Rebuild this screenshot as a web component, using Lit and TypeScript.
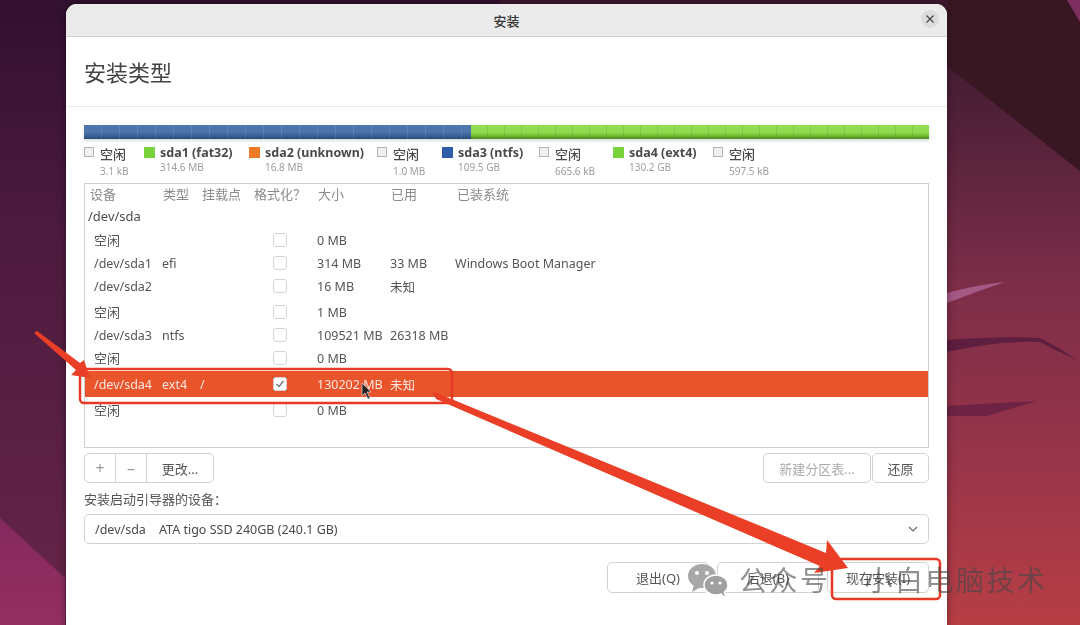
import { LitElement, html, css } from "lit";
import { customElement } from "lit/decorators.js";

const legend = [
  { free: true, w: 60, name: "空闲", size: "3.1 kB" },
  { w: 105, color: "#78d23c", name: "sda1 (fat32)", size: "314.6 MB" },
  { w: 128, color: "#ee7a28", name: "sda2 (unknown)", size: "16.8 MB" },
  { free: true, w: 65, name: "空闲", size: "1.0 MB" },
  { w: 97, color: "#2f5ca8", name: "sda3 (ntfs)", size: "109.5 GB" },
  { free: true, w: 74, name: "空闲", size: "665.6 kB" },
  { w: 100, color: "#78d23c", name: "sda4 (ext4)", size: "130.2 GB" },
  { free: true, w: 100, name: "空闲", size: "597.5 kB" },
];

const rows = [
  { h: 26, dev: "空闲", cn: true, size: "0 MB" },
  { h: 20, dev: "/dev/sda1", type: "efi", size: "314 MB", used: "33 MB", sys: "Windows Boot Manager" },
  { h: 26, dev: "/dev/sda2", size: "16 MB", used: "未知" },
  { h: 26, dev: "空闲", cn: true, size: "1 MB" },
  { h: 20, dev: "/dev/sda3", type: "ntfs", size: "109521 MB", used: "26318 MB" },
  { h: 26, dev: "空闲", cn: true, size: "0 MB" },
  { h: 26, dev: "/dev/sda4", type: "ext4", mount: "/", size: "130202 MB", used: "未知", sel: true },
  { h: 26, dev: "空闲", cn: true, size: "0 MB" },
];

@customElement("app-root")
export class AppRoot extends LitElement {
  static styles = css`
    :host {
      display: block;
      width: 1080px;
      height: 625px;
      overflow: hidden;
      position: relative;
      font-family: "Noto Sans", "Noto Sans CJK SC", sans-serif;
      background: #4a1838;
    }
    .wall { position: absolute; inset: 0; width: 1080px; height: 625px; }
    .window {
      position: absolute;
      left: 66px;
      top: 4px;
      width: 881px;
      height: 640px;
      background: #fff;
      border-radius: 11px 11px 0 0;
      box-shadow: 0 0 9px rgba(0, 0, 0, 0.4);
      display: flex;
      flex-direction: column;
      filter: blur(0.55px);
      color: #3d3d3d;
    }
    .titlebar {
      height: 33px;
      box-sizing: border-box;
      background: #ebebeb;
      border-bottom: 1px solid #d3d3d3;
      border-radius: 11px 11px 0 0;
      display: flex;
      align-items: center;
      justify-content: center;
      position: relative;
      font-size: 13px;
      font-weight: 500;
      color: #333;
      flex: none;
    }
    .close {
      position: absolute;
      right: 8px;
      top: 6px;
      width: 18px;
      height: 18px;
      border-radius: 50%;
      background: #dcdcdc;
      display: flex;
      align-items: center;
      justify-content: center;
    }
    .head {
      height: 70px;
      box-sizing: border-box;
      border-bottom: 1px solid #e8e8e8;
      padding: 0 0 2px 18px;
      display: flex;
      align-items: center;
      font-size: 22px;
      color: #444;
      flex: none;
    }
    .content {
      padding: 18px 18px 0 18px;
      display: flex;
      flex-direction: column;
    }
    .bar {
      height: 14px;
      display: flex;
      box-shadow: 0 2px 3px rgba(120, 150, 130, 0.3);
    }
    .seg { height: 14px; }
    .seg.blue {
      width: 387px;
      background:
        repeating-linear-gradient(90deg, transparent 0 17px, rgba(255, 255, 255, 0.1) 17px 18px),
        linear-gradient(180deg, #4d76ad 0 50%, #3f669c 70%, #274a78 100%);
    }
    .seg.green {
      flex: 1;
      background:
        repeating-linear-gradient(90deg, transparent 0 16px, rgba(60, 120, 20, 0.16) 16px 17px),
        linear-gradient(180deg, #92dc50 0 50%, #7cc63c 70%, #4c8a1e 100%);
    }
    .legend {
      display: flex;
      height: 44px;
      padding-top: 7px;
      box-sizing: border-box;
    }
    .item { display: flex; gap: 5px; align-items: flex-start; flex: none; }
    .swatch { width: 11px; height: 11px; margin-top: 1px; flex: none; box-sizing: border-box; }
    .swatch.free { border: 1px solid #b5b5b5; background: #f0f0f0; width: 10px; height: 10px; margin-right: 1px; }
    .ltxt { display: flex; flex-direction: column; }
    .lname { font-size: 12.5px; font-weight: 700; line-height: 14px; color: #4a4a4a; white-space: nowrap; }
    .lsize { font-size: 10px; line-height: 14px; color: #9d9d9d; white-space: nowrap; }
    .item.isfree .ltxt { padding-top: 1px; }
    .item.isfree .lname { font-weight: 500; font-size: 13px; line-height: 15px; }
    .item.isfree .lsize { line-height: 18px; }
    .table {
      height: 265px;
      box-sizing: border-box;
      border: 1px solid #cfcfcf;
      display: flex;
      flex-direction: column;
      font-size: 12.5px;
      color: #555;
    }
    .row {
      display: grid;
      grid-template-columns: 77px 38px 50px 67px 73px 65px 1fr;
      align-items: center;
      white-space: nowrap;
      flex: none;
    }
    .thead { height: 22px; box-sizing: border-box; padding-bottom: 3px; color: #8a8a8a; font-size: 13px; }
    .thead span:nth-child(1) { padding-left: 5px; }
    .thead span:nth-child(2) { padding-left: 1px; }
    .thead span:nth-child(3) { padding-left: 2px; }
    .thead span:nth-child(4) { padding-left: 4px; }
    .thead span:nth-child(5) { padding-left: 1px; }
    .thead span:nth-child(6) { padding-left: 1px; }
    .thead span:nth-child(7) { padding-left: 2px; }
    .diskrow { height: 21px; box-sizing: border-box; padding: 0 0 1px 3px; font-size: 13px; color: #4a4a4a; }
    .row.data > span:first-child { padding-left: 9px; }
    .row.data { color: #555; }
    .row.data.sel { background: #e9542b; color: #fbe6de; }
    .row.data > span.cn { font-size: 13px; padding-bottom: 2px; }
    .center { display: flex; padding-left: 23px; }
    .chk {
      width: 14px;
      height: 14px;
      box-sizing: border-box;
      border: 1px solid #d4d4d4;
      border-radius: 3px;
      background: #fff;
      display: flex;
      align-items: center;
      justify-content: center;
    }
    .tools { display: flex; justify-content: space-between; margin-top: 5px; height: 30px; }
    .group { display: flex; }
    .btn {
      box-sizing: border-box;
      height: 30px;
      border: 1px solid #d2d2d2;
      background: #fff;
      display: flex;
      align-items: center;
      justify-content: center;
      font-size: 13px;
      color: #555;
      white-space: nowrap;
    }
    .g1 { width: 32px; border-radius: 5px 0 0 5px; font-size: 16px; color: #999; }
    .g2 { width: 31px; border-left: 0; font-size: 16px; color: #999; }
    .g3 { width: 67px; border-left: 0; border-radius: 0 5px 5px 0; }
    .r1 { width: 108px; border-radius: 5px; color: #aaa; }
    .r2 { width: 57px; border-radius: 5px; margin-left: 1px; color: #555; }
    .label { height: 31px; display: flex; align-items: center; font-size: 13px; color: #555; }
    .combo {
      height: 30px;
      box-sizing: border-box;
      border: 1px solid #d2d2d2;
      border-radius: 5px;
      display: flex;
      align-items: center;
      padding: 0 10px;
      font-size: 12.5px;
      color: #4a4a4a;
      white-space: nowrap;
    }
    .combo .dev { width: 64px; }
    .combo .disk { flex: 1; }
    .actions { display: flex; justify-content: flex-end; margin-top: 18px; gap: 8px; }
    .act { width: 102px; height: 31px; border-radius: 5px; }
    .anno { position: absolute; inset: 0; width: 1080px; height: 625px; pointer-events: none; filter: blur(0.4px); }
    .mark {
      position: absolute;
      left: 687px;
      top: 562px;
      display: flex;
      align-items: center;
      font-size: 28px;
      color: rgba(70, 70, 70, 0.6);
      letter-spacing: 2.5px;
      white-space: nowrap;
      height: 36px;
      filter: blur(0.3px);
    }
    .mark svg { margin-right: 8px; }
    .mark .t { display: block; line-height: 36px; }
    .mark .t2 { display: block; line-height: 36px; margin-left: 34px; }
  `;

  private wall() {
    return html`<svg class="wall" viewBox="0 0 1080 625" preserveAspectRatio="none">
      <defs>
        <linearGradient id="l" x1="0" y1="0" x2="0" y2="1">
          <stop offset="0" stop-color="#331030" />
          <stop offset="0.35" stop-color="#4b1a3e" />
          <stop offset="0.8" stop-color="#5f2246" />
          <stop offset="1" stop-color="#652447" />
        </linearGradient>
        <linearGradient id="m" x1="0" y1="0" x2="0" y2="1">
          <stop offset="0" stop-color="#85295f" />
          <stop offset="1" stop-color="#952f60" />
        </linearGradient>
        <linearGradient id="r" x1="0" y1="0" x2="0" y2="1">
          <stop offset="0" stop-color="#40192f" />
          <stop offset="0.15" stop-color="#4a1f36" />
          <stop offset="0.45" stop-color="#7c2d48" />
          <stop offset="0.72" stop-color="#96344a" />
          <stop offset="1" stop-color="#b83e44" />
        </linearGradient>
      </defs>
      <rect x="0" y="0" width="500" height="625" fill="url(#l)" />
      <rect x="500" y="0" width="580" height="625" fill="url(#r)" />
      <polygon points="0,518 65,578 65,625 0,625" fill="url(#m)" />
      <polygon points="947,0 1080,0 1080,171 947,66" fill="#391722" />
      <polygon points="1067,0 1080,0 1080,22" fill="#7d3060" />
      <path d="M947 293 Q975 285 1005 282 Q975 292 947 303Z" fill="#a55a85" />
      <path d="M947 340 Q1000 336 1040 338 Q1060 348 1077 360 Q1055 350 1040 342 Q1000 340 947 352Z" fill="#5e1e40" />
      <path d="M947 406 L1037 401 L987 416 L947 416Z" fill="#6e2344" />
    </svg>`;
  }

  private annotations() {
    return html`<svg class="anno" viewBox="0 0 1080 625">
      <rect x="80" y="369" width="372" height="34" rx="4" fill="none" stroke="#e63a26" stroke-width="2.5" />
      <rect x="832" y="559" width="108" height="40" rx="4" fill="none" stroke="#e63a26" stroke-width="2.5" />
      <polygon points="34,333 37,331 80,363 84,360 90,378 71,375 76,370" fill="#ea3f26" />
      <polygon points="432,391 826,553 827,540 848,568 814,573 820,566 436,399" fill="#ea3f26" />
      <g transform="translate(362,383)">
        <path d="M0 0 V13 L3 10 L6 16 L8 15 L5 9 H9Z" fill="#222" stroke="#ddd" stroke-width="0.7" />
      </g>
    </svg>`;
  }

  render() {
    return html`
      ${this.wall()}
      <div class="window">
        <div class="titlebar">
          安装
          <div class="close">
            <svg width="10" height="10" viewBox="0 0 10 10"><path d="M1.5 1.5 8.5 8.5M8.5 1.5 1.5 8.5" stroke="#444" stroke-width="1.2" /></svg>
          </div>
        </div>
        <div class="head">安装类型</div>
        <div class="content">
          <div class="bar"><div class="seg blue"></div><div class="seg green"></div></div>
          <div class="legend">
            ${legend.map(
              (l) => html`<div class="item ${l.free ? "isfree" : ""}" style="width:${l.w}px">
                <div class="swatch ${l.free ? "free" : ""}" style=${l.color ? `background:${l.color}` : ""}></div>
                <div class="ltxt"><span class="lname">${l.name}</span><span class="lsize">${l.size}</span></div>
              </div>`
            )}
          </div>
          <div class="table">
            <div class="row thead">
              <span>设备</span><span>类型</span><span>挂载点</span><span>格式化？</span><span>大小</span><span>已用</span><span>已装系统</span>
            </div>
            <div class="row diskrow"><span>/dev/sda</span></div>
            ${rows.map(
              (r) => html`<div class="row data ${r.sel ? "sel" : ""}" style="height:${r.h}px">
                <span class="${r.cn ? "cn" : ""}">${r.dev}</span><span>${r.type ?? ""}</span><span>${r.mount ?? ""}</span>
                <span class="center"><span class="chk">${r.sel
                  ? html`<svg width="10" height="10" viewBox="0 0 10 10"><path d="M1.5 5 4 7.5 8.5 2" fill="none" stroke="#777" stroke-width="1.4" /></svg>`
                  : ""}</span></span>
                <span>${r.size}</span><span>${r.used ?? ""}</span><span>${r.sys ?? ""}</span>
              </div>`
            )}
          </div>
          <div class="tools">
            <div class="group">
              <div class="btn g1">+</div><div class="btn g2">–</div><div class="btn g3">更改...</div>
            </div>
            <div class="group">
              <div class="btn r1">新建分区表...</div><div class="btn r2">还原</div>
            </div>
          </div>
          <div class="label">安装启动引导器的设备：</div>
          <div class="combo">
            <span class="dev">/dev/sda</span><span class="disk">ATA tigo SSD 240GB (240.1 GB)</span>
            <svg width="10" height="6" viewBox="0 0 10 6"><path d="M1 1 5 5 9 1" fill="none" stroke="#666" stroke-width="1.1" /></svg>
          </div>
          <div class="actions">
            <div class="btn act">退出(Q)</div><div class="btn act">后退(B)</div><div class="btn act">现在安装(I)</div>
          </div>
        </div>
      </div>
      ${this.annotations()}
      <div class="mark">
        <svg width="44" height="36" viewBox="0 0 44 36">
          <ellipse cx="15" cy="14" rx="14" ry="12" fill="#a8a8a8" />
          <polygon points="7,22 5,30 14,25" fill="#a8a8a8" />
          <ellipse cx="29" cy="23" rx="12" ry="10" fill="#a0a0a0" stroke="#fff" stroke-width="1.5" />
          <polygon points="34,31 38,35 36,28" fill="#a0a0a0" />
          <circle cx="10" cy="11" r="2" fill="#fff" /><circle cx="20" cy="11" r="2" fill="#fff" />
          <circle cx="25" cy="21" r="1.6" fill="#fff" /><circle cx="33" cy="21" r="1.6" fill="#fff" />
        </svg>
        <span class="t">公众号</span><span class="t2">小白电脑技术</span>
      </div>
    `;
  }
}
